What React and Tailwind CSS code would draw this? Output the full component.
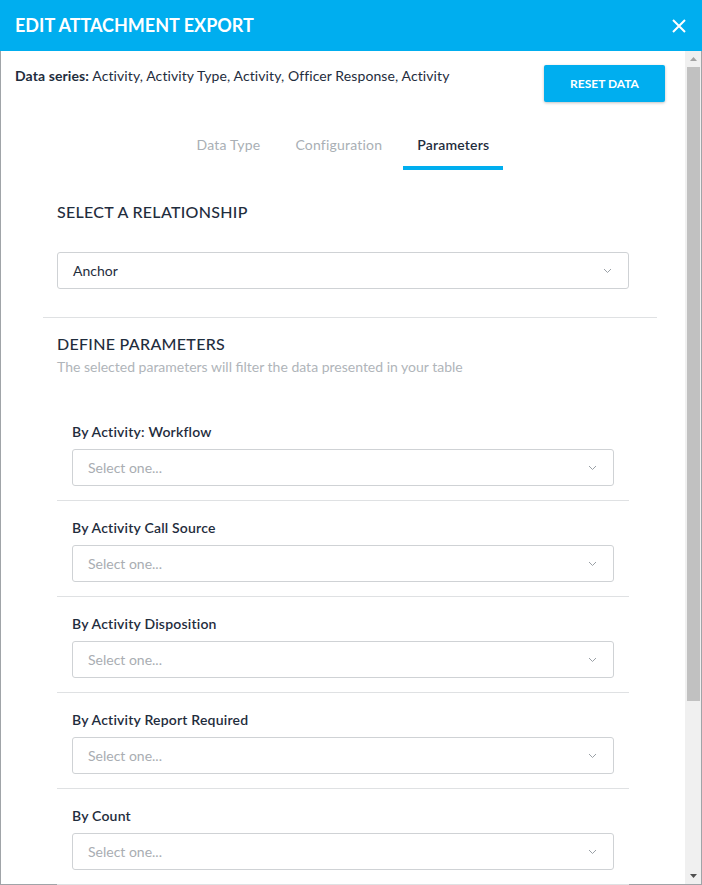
import React from 'react';

function Chevron() {
  return (
    <svg width="9" height="6" viewBox="0 0 9 6" fill="none" className="shrink-0">
      <path d="M1 1l3.5 3.5L8 1" stroke="#9aa0a6" strokeWidth="1" />
    </svg>
  );
}

function SelectBox({ value, placeholder }) {
  return (
    <div className="h-[37px] border border-[#cfd2d5] rounded-[3px] flex items-center justify-between pl-[15px] pr-[16px] bg-white">
      <span className={`text-[14px] leading-[16px] ${value ? 'text-[#1f2d3d]' : 'text-[#a9adb2]'}`}>
        {value || placeholder}
      </span>
      <Chevron />
    </div>
  );
}

export default function App() {
  const params = [
    'By Activity: Workflow',
    'By Activity Call Source',
    'By Activity Disposition',
    'By Activity Report Required',
    'By Count',
  ];

  return (
    <div className="w-[702px] h-[885px] flex flex-col overflow-hidden bg-white" style={{ fontFamily: 'Lato, "Noto Sans", sans-serif' }}>
      {/* Header */}
      <div className="h-[51px] shrink-0 bg-[#00aeef] flex items-center justify-between pl-[15px] pr-[16px]">
        <h1 className="text-white text-[18px] font-bold">EDIT ATTACHMENT EXPORT</h1>
        <svg width="14" height="14" viewBox="0 0 14 14">
          <path d="M1 1l12 12M13 1L1 13" stroke="white" strokeWidth="2" />
        </svg>
      </div>

      {/* Body */}
      <div className="flex-1 flex border-l border-r border-b border-[#a0a4a8] min-h-0">
        <div className="flex-1 min-w-0">
          {/* Data series row */}
          <div className="flex justify-between items-start pl-[14px] pr-[20px] pt-[14px]">
            <p className="text-[14px] leading-[16px] text-[#1f2d3d] mt-[3px] tracking-[0.1px]">
              <span className="font-bold">Data series:</span> Activity, Activity Type, Activity, Officer Response, Activity
            </p>
            <button className="w-[121px] h-[37px] bg-[#00aeef] text-white text-[12px] font-bold rounded-[2px] shadow-[0_1px_3px_rgba(0,0,0,0.25)]">
              RESET DATA
            </button>
          </div>

          {/* Tabs */}
          <div className="flex justify-center gap-[7px] mt-[35px]">
            <div className="px-[14px] pb-[13px] border-b-4 border-transparent text-[14px] leading-[16px] text-[#a9afb5] tracking-[0.2px]">Data Type</div>
            <div className="px-[14px] pb-[13px] border-b-4 border-transparent text-[14px] leading-[16px] text-[#a9afb5] tracking-[0.2px]">Configuration</div>
            <div className="px-[14px] pb-[13px] border-b-4 border-[#00aeef] text-[14px] leading-[16px] text-[#1f2d3d] font-semibold tracking-[0.2px]">Parameters</div>
          </div>

          {/* Select a relationship */}
          <div className="px-[56px]">
            <h2 className="mt-[32px] text-[16px] leading-[20px] text-[#1f2d3d] font-medium tracking-[0.3px]">SELECT A RELATIONSHIP</h2>
            <div className="mt-[30px]">
              <SelectBox value="Anchor" />
            </div>
          </div>

          <div className="ml-[42px] mr-[28px] mt-[28px] border-t border-[#dfe1e3]" />

          {/* Define parameters */}
          <div className="px-[56px]">
            <h2 className="mt-[16px] text-[16px] leading-[20px] text-[#1f2d3d] font-medium tracking-[0.3px]">DEFINE PARAMETERS</h2>
            <p className="mt-[5px] text-[14px] leading-[16px] text-[#b0b5ba]">
              The selected parameters will filter the data presented in your table
            </p>

            <div className="mt-[30px]">
              {params.map((label) => (
                <div key={label} className="px-[15px] pt-[19px] pb-[14px] border-b border-[#dfe1e3]">
                  <p className="text-[14px] leading-[16px] text-[#1f2d3d] font-semibold mb-[9px] tracking-[0.2px]">{label}</p>
                  <SelectBox placeholder="Select one..." />
                </div>
              ))}
            </div>
          </div>
        </div>

        {/* Scrollbar */}
        <div className="w-[16px] shrink-0 bg-[#f0f0f0] flex flex-col items-center">
          <div className="h-[16px] w-full flex items-center justify-center">
            <svg width="7" height="4" viewBox="0 0 7 4"><path d="M0 4L3.5 0L7 4z" fill="#a3a3a3" /></svg>
          </div>
          <div className="w-[13px] ml-[1px] h-[634px] bg-[#c1c1c1]" />
          <div className="flex-1" />
          <div className="h-[16px] w-full flex items-center justify-center">
            <svg width="7" height="4" viewBox="0 0 7 4"><path d="M0 0L3.5 4L7 0z" fill="#505050" /></svg>
          </div>
        </div>
      </div>
    </div>
  );
}
